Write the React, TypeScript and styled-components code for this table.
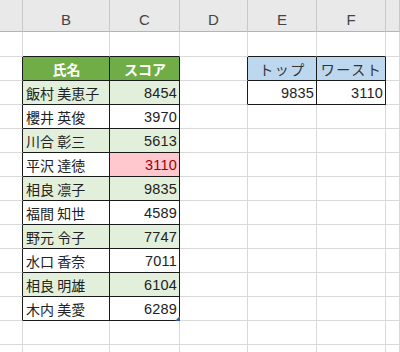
import React from 'react'
import styled, { createGlobalStyle, css } from 'styled-components'

const GlobalStyle = createGlobalStyle`
    html, body {
        margin: 0;
        padding: 0;
        background: #ffffff;
    }
    body {
        font-family: 'Noto Sans CJK JP', 'Liberation Sans', sans-serif;
        overflow: hidden;
    }
`

const COLS = ['A', 'B', 'C', 'D', 'E', 'F', 'G']
const WIDTHS = [23, 87, 70, 68, 69, 69, 14]
const ROW_HEIGHTS = [25, 24, 24, 24, 24, 24, 24, 24, 24, 24, 24, 24, 24, 24]

type Tone = 'green' | 'stripe' | 'bad' | 'blue' | 'plain'

interface CellData {
    text?: string
    tone?: Tone
    align?: 'left' | 'right' | 'center'
}

const names = ['飯村 美恵子', '櫻井 英俊', '川合 彰三', '平沢 達徳', '相良 凛子', '福間 知世', '野元 令子', '水口 香奈', '相良 明雄', '木内 美愛']
const scores = ['8454', '3970', '5613', '3110', '9835', '4589', '7747', '7011', '6104', '6289']

// cells keyed as "row,col" (row 0 = sheet row 1)
const cells: Record<string, CellData> = {
    '1,1': { text: '氏名', tone: 'green', align: 'center' },
    '1,2': { text: 'スコア', tone: 'green', align: 'center' },
    '1,4': { text: 'トップ', tone: 'blue', align: 'center' },
    '1,5': { text: 'ワースト', tone: 'blue', align: 'center' },
    '2,4': { text: '9835', tone: 'plain', align: 'right' },
    '2,5': { text: '3110', tone: 'plain', align: 'right' },
}
names.forEach((n, i) => {
    const stripe = i % 2 === 0
    cells[`${i + 2},1`] = { text: n, tone: stripe ? 'stripe' : 'plain', align: 'left' }
    cells[`${i + 2},2`] = { text: scores[i], tone: scores[i] === '3110' ? 'bad' : stripe ? 'stripe' : 'plain', align: 'right' }
})

const inTable = (r: number, c: number) => !!cells[`${r},${c}`]

const Sheet = styled.div`
    display: grid;
    grid-template-columns: ${WIDTHS.map(w => `${w}px`).join(' ')};
    grid-template-rows: 32px ${ROW_HEIGHTS.map(h => `${h}px`).join(' ')};
    width: 400px;
    height: 352px;
    overflow: hidden;
`

const ColHeader = styled.div<{ $last?: boolean }>`
    display: flex;
    align-items: flex-end;
    justify-content: center;
    padding-bottom: 3px;
    box-sizing: border-box;
    background: #e9e9e9;
    border-right: 1px solid #c8c8c8;
    border-bottom: 1px solid #b4b4b4;
    color: #444444;
    font-family: 'Liberation Sans', 'Noto Sans', sans-serif;
    font-size: 15px;
`

const toneStyles: Record<Tone, ReturnType<typeof css>> = {
    green: css`
        background: #70ad47;
        color: #ffffff;
        font-weight: 700;
    `,
    stripe: css`
        background: #e2efda;
        color: #222222;
    `,
    bad: css`
        background: #ffc7ce;
        color: #9c0006;
    `,
    blue: css`
        background: #bdd7ee;
        color: #333333;
    `,
    plain: css`
        background: #ffffff;
        color: #222222;
    `,
}

const Cell = styled.div<{ $tone?: Tone; $align?: string; $right: string; $bottom: string }>`
    position: relative;
    display: flex;
    align-items: center;
    justify-content: ${p => (p.$align === 'right' ? 'flex-end' : p.$align === 'center' ? 'center' : 'flex-start')};
    padding: 0 2px 0 3px;
    box-sizing: border-box;
    border-right: 1px solid ${p => p.$right};
    border-bottom: 1px solid ${p => p.$bottom};
    font-size: 14px;
    white-space: nowrap;
    overflow: visible;
    ${p => p.$tone && toneStyles[p.$tone]}
`

const Num = styled.span`
    font-family: 'Liberation Sans', 'Noto Sans', sans-serif;
    font-size: 14.5px;
    letter-spacing: 0.2px;
`

const Label = styled.span<{ $spaced?: boolean }>`
    letter-spacing: ${p => (p.$spaced ? '1.5px' : '0')};
`

const ResizeHandle = styled.span`
    position: absolute;
    right: -1px;
    bottom: -1px;
    width: 0;
    height: 0;
    border-left: 5px solid transparent;
    border-bottom: 5px solid #2f5597;
`

export default function App() {
    const grid = '#d9d9d9'
    const line = '#1a1a1a'
    return (
        <>
            <GlobalStyle />
            <Sheet>
                {COLS.map(c => (
                    <ColHeader key={c}>{c === 'A' || c === 'G' ? '' : c}</ColHeader>
                ))}
                {ROW_HEIGHTS.map((_, r) =>
                    COLS.map((_, c) => {
                        const d = cells[`${r},${c}`]
                        const right = inTable(r, c) || inTable(r, c + 1) ? line : grid
                        const bottom = inTable(r, c) || inTable(r + 1, c) ? line : grid
                        const isNum = d?.text && /^\d+$/.test(d.text)
                        return (
                            <Cell key={`${r}-${c}`} $tone={d?.tone} $align={d?.align} $right={right} $bottom={bottom}>
                                {d?.text && (isNum ? <Num>{d.text}</Num> : <Label $spaced={d.tone === 'blue'}>{d.text}</Label>)}
                                {r === 11 && c === 2 && <ResizeHandle />}
                            </Cell>
                        )
                    })
                )}
            </Sheet>
        </>
    )
}
